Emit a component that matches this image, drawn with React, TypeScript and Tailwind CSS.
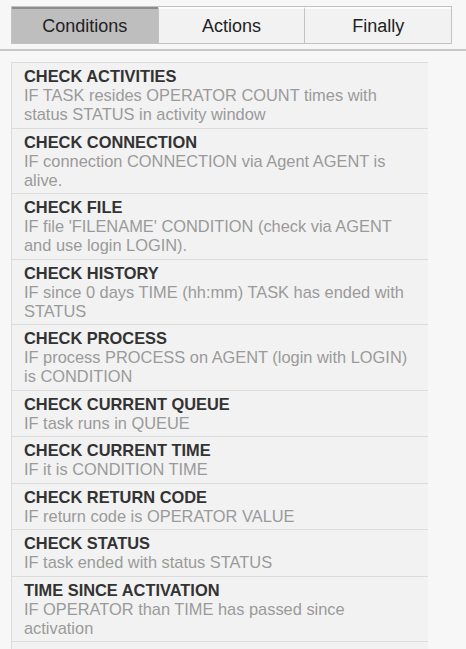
import { useState } from "react";

type Condition = {
  title: string;
  text: string;
};

const conditions: Condition[] = [
  { title: "CHECK ACTIVITIES", text: "IF TASK resides OPERATOR COUNT times with status STATUS in activity window" },
  { title: "CHECK CONNECTION", text: "IF connection CONNECTION via Agent AGENT is alive." },
  { title: "CHECK FILE", text: "IF file 'FILENAME' CONDITION (check via AGENT and use login LOGIN)." },
  { title: "CHECK HISTORY", text: "IF since 0 days TIME (hh:mm) TASK has ended with STATUS" },
  { title: "CHECK PROCESS", text: "IF process PROCESS on AGENT (login with LOGIN) is CONDITION" },
  { title: "CHECK CURRENT QUEUE", text: "IF task runs in QUEUE" },
  { title: "CHECK CURRENT TIME", text: "IF it is CONDITION TIME" },
  { title: "CHECK RETURN CODE", text: "IF return code is OPERATOR VALUE" },
  { title: "CHECK STATUS", text: "IF task ended with status STATUS" },
  { title: "TIME SINCE ACTIVATION", text: "IF OPERATOR than TIME has passed since activation" },
];

const tabs = ["Conditions", "Actions", "Finally"];

export default function App() {
  const [active, setActive] = useState(0);

  return (
    <div className="min-h-screen bg-[#f7f7f7] pt-[6px] font-['Liberation_Sans',Arial,sans-serif]">
      <div className="ml-[11px] mr-[14px] flex border border-[#c2c2c2]">
        {tabs.map((tab, i) => (
          <button
            key={tab}
            type="button"
            onClick={() => setActive(i)}
            className={`flex h-[36px] flex-1 items-center justify-center border-t-[2px] text-[18px] text-[#222] ${
              i > 0 ? "border-l border-l-[#c2c2c2]" : ""
            } ${active === i ? "border-t-[#8c8c8c] bg-[#bebebe]" : "border-t-[#fbfbfb] bg-[#f2f2f2]"}`}
          >
            {tab}
          </button>
        ))}
      </div>

      <div className="mt-[5px] h-[2px] bg-[#c8c8c8]" />

      <div className="ml-[11px] mt-[11px] w-[417px] border-l border-t border-[#dcdcdc] bg-[#f2f2f2] pb-6">
        {conditions.map((c) => (
          <div key={c.title} className="border-b border-[#dcdcdc] pb-[3.5px] pl-[12px] pr-[12px] pt-[4px]">
            <h2 className="text-[16.4px] font-bold leading-[19px] text-[#333]">{c.title}</h2>
            <p className="text-[16.4px] leading-[19px] text-[#9a9a9a]">{c.text}</p>
          </div>
        ))}
      </div>
    </div>
  );
}
